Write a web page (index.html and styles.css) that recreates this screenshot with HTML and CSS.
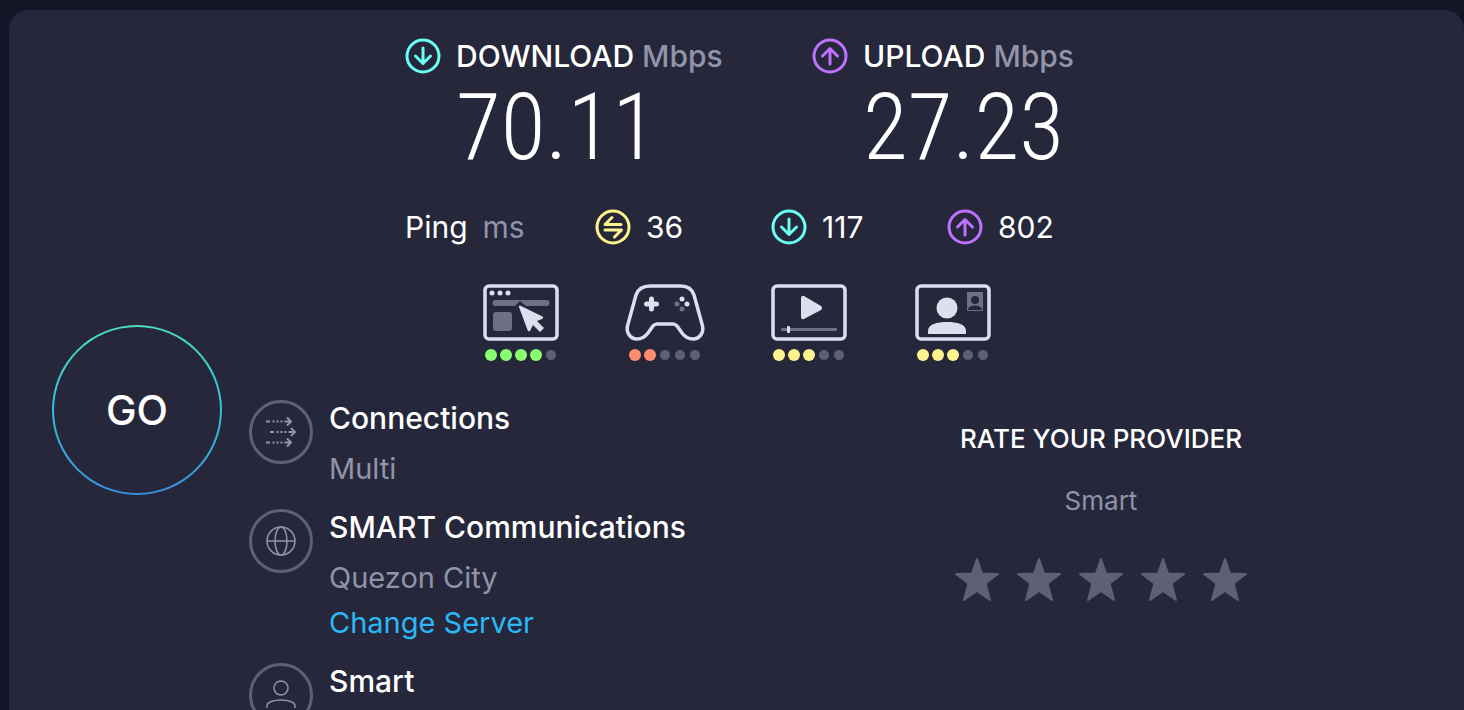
FILE: index.html
```
<!DOCTYPE html>
<html lang="en">
<head>
  <meta charset="UTF-8" />
  <meta name="viewport" content="width=device-width, initial-scale=1.0"/>
  <title>Speed Test – Results</title>
  <link rel="stylesheet" href="styles.css">
</head>
<body>

  <!-- shared icons -->
  <svg class="sprite" aria-hidden="true">
    <symbol id="arrow-down" viewBox="0 0 36 36">
      <circle cx="18" cy="18" r="16"/>
      <path d="M18 10V25M10.500 18L18 25.500L25.500 18"/>
    </symbol>
    <symbol id="arrow-up" viewBox="0 0 36 36">
      <circle cx="18" cy="18" r="16"/>
      <path d="M18 26V11M10.500 18L18 10.500L25.500 18"/>
    </symbol>
    <symbol id="idle" viewBox="0 0 36 36">
      <circle cx="18" cy="18" r="16"/>
      <path d="M26 15.500H10L17 8.500M10 21H26.500L19.500 28"/>
    </symbol>
    <symbol id="star" viewBox="0 0 44 44">
      <path d="M22 2L27 16.500L43 17L30.500 26.500L35 43L22 34L9 43L13.500 26.500L1 17L17 16.500Z"/>
    </symbol>
  </svg>

  <main class="card">
    <section class="speeds">
      <div class="speed">
        <svg class="icon download"><use href="#arrow-down"/></svg>
        <h2>DOWNLOAD <span class="unit">Mbps</span></h2>
        <div class="number">70.11</div>
      </div>
      <div class="speed">
        <svg class="icon upload"><use href="#arrow-up"/></svg>
        <h2>UPLOAD <span class="unit">Mbps</span></h2>
        <div class="number">27.23</div>
      </div>
    </section>

    <section class="pings">
      <div class="ping">Ping <span class="muted">ms</span></div>
      <div class="ping"><svg class="icon idle"><use href="#idle"/></svg>36</div>
      <div class="ping"><svg class="icon download"><use href="#arrow-down"/></svg>117</div>
      <div class="ping"><svg class="icon upload"><use href="#arrow-up"/></svg>802</div>
    </section>

    <section class="features">
      <div class="feature">
        <svg class="picture" viewBox="0 0 76 58" role="img" aria-label="Browsing">
          <rect class="line" x="2" y="3" width="72" height="53" rx="4"/>
          <g class="solid">
            <circle cx="9" cy="10" r="2.500"/><circle cx="17" cy="10" r="2.500"/><circle cx="25" cy="10" r="2.500"/>
          </g>
          <path class="dim" d="M12.500 17H63.500A2.500 2.500 0 0 1 63.500 23H43L37 18L32 23H12.500A2.500 2.500 0 0 1 12.500 17Z"/>
          <rect class="dim" x="10" y="29" width="19" height="19" rx="3"/>
          <path class="solid" d="M37 22.500L59.500 33.500Q61 35 59 36L54 38L61 45L57 49L50 42L47 48Q45.500 49 44.500 47L36 24Q35.500 22 37 22.500Z"/>
        </svg>
        <div class="dots good"><i class="on"></i><i class="on"></i><i class="on"></i><i class="on"></i><i></i></div>
      </div>
      <div class="feature">
        <svg class="picture" viewBox="0 0 76 58" role="img" aria-label="Gaming">
          <path class="line" d="M23 3H54C61 3 65 6 67 12L75 41C78 50 72 56 66 56C61 56 58 54 55 50L50 43Q48 41 46 41H30Q28 41 26 43L21 50C18 54 15 56 10 56C4 56 -2 50 1 41L9 12C11 6 16 3 23 3Z"/>
          <path class="plus" d="M24.500 16V26M19.500 21H29.500"/>
          <circle class="solid" cx="55" cy="16" r="2.500"/><circle class="solid" cx="60" cy="21" r="2.500"/>
          <circle class="dim" cx="50" cy="21" r="2.500"/><circle class="dim" cx="55" cy="26" r="2.500"/>
        </svg>
        <div class="dots bad"><i class="on"></i><i class="on"></i><i></i><i></i><i></i></div>
      </div>
      <div class="feature">
        <svg class="picture" viewBox="0 0 76 58" role="img" aria-label="Streaming">
          <rect class="line" x="2" y="3" width="72" height="53" rx="4"/>
          <path class="solid" d="M30 15Q30 12 33 13L50 23Q52 25 50 27L33 36Q30 37 30 34Z"/>
          <rect class="dim" x="10" y="45" width="56" height="3" rx="1"/>
          <rect class="solid" x="16" y="43" width="3" height="7" rx="1"/>
        </svg>
        <div class="dots fair"><i class="on"></i><i class="on"></i><i class="on"></i><i></i><i></i></div>
      </div>
      <div class="feature">
        <svg class="picture" viewBox="0 0 76 58" role="img" aria-label="Video chat">
          <rect class="line" x="2" y="3" width="72" height="53" rx="4"/>
          <circle class="solid" cx="32" cy="25" r="10.500"/>
          <path class="solid" d="M13 51V48C13 41 22 39 32 39S51 41 51 48V51Z"/>
          <rect class="dim" x="52" y="9" width="16" height="19"/>
          <circle class="cut" cx="60" cy="17" r="4"/>
          <path class="cut" d="M53 27C53 21 67 21 67 27Z"/>
        </svg>
        <div class="dots fair"><i class="on"></i><i class="on"></i><i class="on"></i><i></i><i></i></div>
      </div>
    </section>

    <section class="lower">
      <button class="go" type="button">GO</button>

      <div class="details">
        <div class="detail">
          <svg class="badge" viewBox="0 0 64 64">
            <circle class="ring" cx="32" cy="32" r="30.500"/>
            <path class="thick" d="M17 21.500H21M23.500 21.500H25.500M27.500 21.500H29.500M31.500 21.500H33.500M35.500 21.500H42M38 17.500L42 21.500L38 25.500M21 32H25M27.500 32H29.500M31.500 32H33.500M35.500 32H37.500M39.500 32H46M42 28L46 32L42 36M17 42.500H21M23.500 42.500H25.500M27.500 42.500H29.500M31.500 42.500H33.500M35.500 42.500H42M38 38.500L42 42.500L38 46.500"/>
          </svg>
          <div>
            <h3>Connections</h3>
            <p>Multi</p>
          </div>
        </div>
        <div class="detail">
          <svg class="badge" viewBox="0 0 64 64">
            <circle class="ring" cx="32" cy="32" r="30.500"/>
            <circle cx="32" cy="32" r="14"/>
            <ellipse cx="32" cy="32" rx="6" ry="14"/>
            <path d="M18 32H46"/>
          </svg>
          <div>
            <h3>SMART Communications</h3>
            <p>Quezon City</p>
            <a href="#">Change Server</a>
          </div>
        </div>
        <div class="detail">
          <svg class="badge" viewBox="0 0 64 64">
            <circle class="ring" cx="32" cy="32" r="30.500"/>
            <circle cx="32" cy="25" r="7"/>
            <path d="M18 45V43C18 35 46 35 46 43V45"/>
          </svg>
          <div>
            <h3>Smart</h3>
          </div>
        </div>
      </div>

      <div class="rate">
        <h4>RATE YOUR PROVIDER</h4>
        <p>Smart</p>
        <div class="stars">
          <button type="button" aria-label="1 star"><svg><use href="#star"/></svg></button>
          <button type="button" aria-label="2 stars"><svg><use href="#star"/></svg></button>
          <button type="button" aria-label="3 stars"><svg><use href="#star"/></svg></button>
          <button type="button" aria-label="4 stars"><svg><use href="#star"/></svg></button>
          <button type="button" aria-label="5 stars"><svg><use href="#star"/></svg></button>
        </div>
      </div>
    </section>
  </main>

</body>
</html>
```

FILE: styles.css
```
* { box-sizing: border-box; margin: 0; padding: 0; }
body {
  display: flex;
  height: 100vh;
  padding: 10px 0 0 9px;
  overflow: hidden;
  font-family: Inter, sans-serif;
  font-size: 29px;
  line-height: 37px;
  background: #141526;
  color: #fff;
}
.sprite {
  display: none;
}
.card {
  flex: 1;
  padding-top: 28px;
  border-radius: 20px 20px 0 0;
  background: #26273b;
}
h2, h3, h4 {
  font-weight: 500;
}
h2, h3 {
  font-size: 30px;
}

.icon {
  flex: none;
  width: 36px;
  height: 36px;
  fill: none;
  stroke: currentColor;
  stroke-width: 3;
  stroke-linecap: round;
  stroke-linejoin: round;
}
.download { color: #6afff3; }
.upload { color: #bf71ff; }
.idle { color: #fff38e; }
.unit, .muted {
  color: #9193a8;
}

.speeds {
  display: grid;
  grid-template-columns: 407px 256px;
  justify-content: center;
}
.speed {
  display: grid;
  grid-template-columns: 36px auto;
  column-gap: 15px;
  justify-content: start;
  white-space: nowrap;
}
.number {
  grid-column: 2;
  font-family: "Roboto Condensed", Roboto, sans-serif;
  font-size: 92px;
  font-weight: 300;
  line-height: 105px;
}

.pings {
  display: grid;
  grid-template-columns: 190px 176px 176px 121px;
  justify-content: center;
  margin-top: 29px;
  font-size: 30px;
}
.ping {
  display: flex;
  gap: 15px;
}

.features {
  display: flex;
  justify-content: center;
  gap: 68px;
  margin-top: 37px;
}
.picture {
  display: block;
  width: 76px;
  height: 58px;
  overflow: visible;
}
.line {
  fill: none;
  stroke: #dddeee;
  stroke-width: 3.500;
}
.plus {
  stroke: #dddeee;
  stroke-width: 5;
  stroke-linecap: round;
}
.solid { fill: #dddeee; }
.dim { fill: #6f7084; }
.cut { fill: #26273b; }
.dots {
  display: flex;
  align-items: center;
  gap: 3px;
  height: 12px;
  margin: 8px 0 0 2px;
}
.dots i {
  width: 12px;
  height: 12px;
  border: 1px solid #26273b;
  border-radius: 50%;
  background: #5f6074;
}
.dots .on { border: none; }
.good .on { background: #88ff70; }
.fair .on { background: #fff38e; }
.bad .on { background: #ff8b70; }

.lower {
  display: grid;
  grid-template-columns: 170px 7fr 11fr;
  column-gap: 27px;
  align-items: start;
  margin-top: 39px;
  padding-left: 43px;
}
.go {
  width: 170px;
  height: 170px;
  margin-top: -75px;
  border: 2px solid transparent;
  border-radius: 50%;
  background:
    linear-gradient(#26273b, #26273b) padding-box,
    linear-gradient(#4be0b8, #2cc4dc 50%, #3a90dc) border-box;
  color: #fff;
  font: 500 41px Inter, sans-serif;
  cursor: pointer;
}
.details {
  display: flex;
  flex-direction: column;
  gap: 22px;
}
.detail {
  display: flex;
  align-items: flex-start;
  gap: 16px;
  white-space: nowrap;
}
.badge {
  flex: none;
  width: 64px;
  height: 64px;
  fill: none;
  stroke: #9193a8;
  stroke-width: 1.500;
}
.badge .ring {
  stroke: #5f6074;
  stroke-width: 3;
}
.badge .thick {
  stroke-width: 2;
}
.detail p {
  margin-top: 13px;
  color: #9193a8;
}
.detail a {
  display: block;
  margin-top: 8px;
  color: #2bb8f5;
  text-decoration: none;
}

.rate {
  padding-top: 20px;
  text-align: center;
}
.rate h4 {
  font-size: 26px;
}
.rate p {
  margin-top: 25px;
  font-size: 26px;
  color: #9193a8;
}
.stars {
  display: flex;
  justify-content: center;
  gap: 18px;
  margin-top: 38px;
}
.stars button {
  border: none;
  background: none;
  cursor: pointer;
}
.stars svg {
  display: block;
  width: 44px;
  height: 44px;
  fill: #5f6074;
  stroke: #5f6074;
  stroke-width: 2;
  stroke-linejoin: round;
}
```
